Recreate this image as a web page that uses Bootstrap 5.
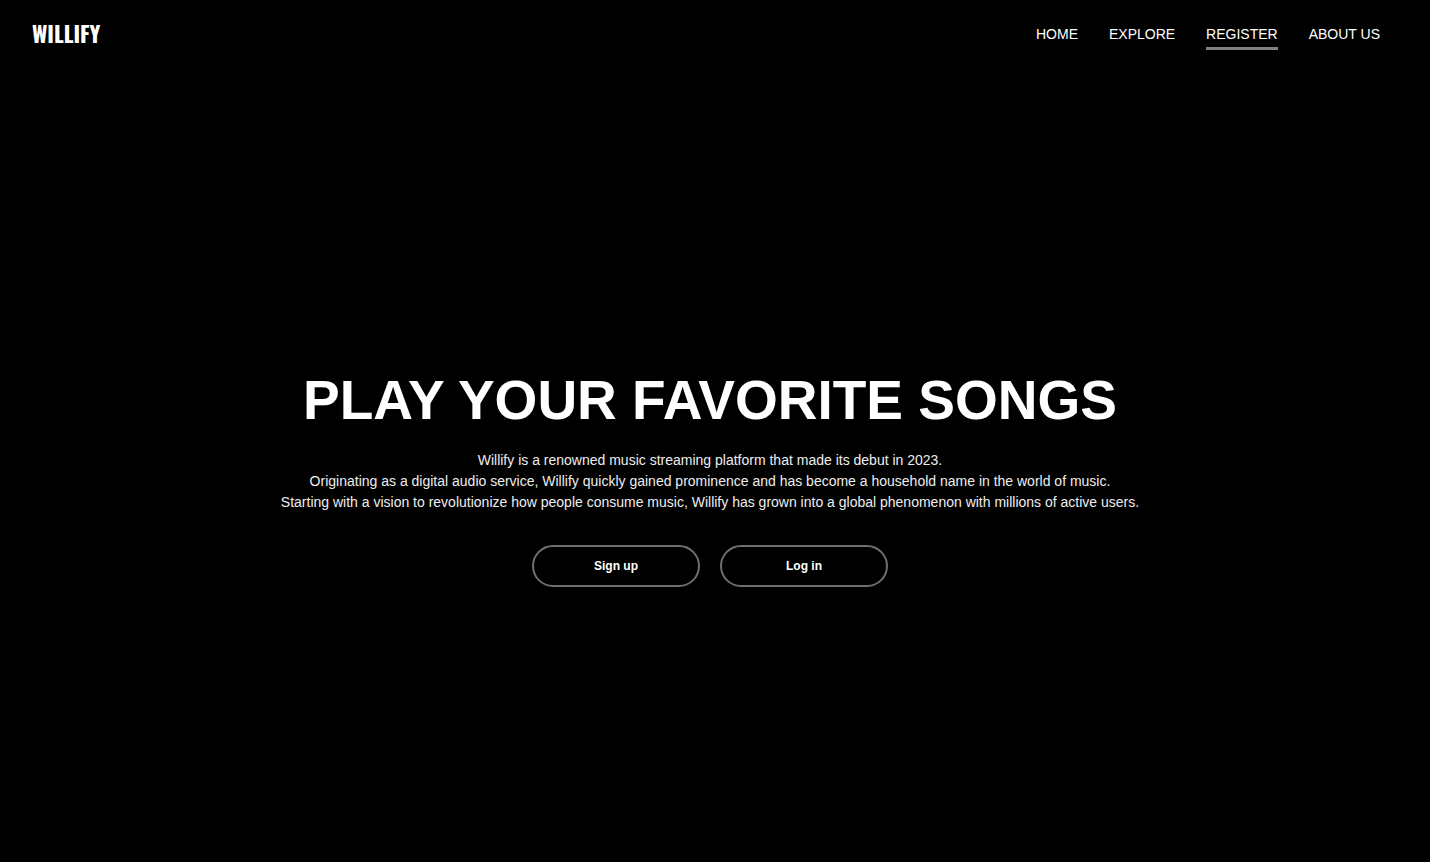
<!DOCTYPE html>
<html lang="en">
<head>
<meta charset="utf-8">
<meta name="viewport" content="width=device-width, initial-scale=1">
<title>Willify</title>
<link href="https://cdn.jsdelivr.net/npm/bootstrap@5.3.0/dist/css/bootstrap.min.css" rel="stylesheet">
<style>
body { font-family: "Liberation Sans", Arial, sans-serif; background: #000; color: #fff; }
.site-nav { padding: 16px 50px 0 32px; }
.brand-name { font-family: Oswald, "Liberation Sans Narrow", "Open Sans Condensed", sans-serif; font-weight: 700; font-size: 22px; line-height: 34px; padding: 0; margin: 0; }
.site-nav .menu { gap: 31px; padding-top: 6px; }
.site-nav .menu .nav-link { padding: 0 0 1px; font-size: 14px; line-height: 24px; color: #fff; border-bottom: 3px solid transparent; }
.site-nav .menu .nav-link.active { border-bottom-color: #808080; }
.hero { padding: 42px 10px 0 0; }
.hero-title { font-size: 55px; line-height: 64px; font-weight: 700; margin-bottom: 18px; }
.hero-copy { font-size: 14px; line-height: 21px; color: #eee; margin-bottom: 32px; }
.hero-actions { gap: 20px; }
.pill { width: 168px; height: 42px; border: 2px solid #6f6f6f; border-radius: 21px; color: #fff; font-size: 12px; font-weight: 700; padding: 0; }
.pill:hover { background: #222; color: #fff; }
</style>
</head>
<body class="min-vh-100 d-flex flex-column">
<header>
  <nav class="site-nav navbar navbar-expand align-items-start justify-content-between">
    <a class="navbar-brand brand-name text-white" href="#">WILLIFY</a>
    <ul class="navbar-nav menu">
      <li class="nav-item"><a class="nav-link" href="#">HOME</a></li>
      <li class="nav-item"><a class="nav-link" href="#">EXPLORE</a></li>
      <li class="nav-item"><a class="nav-link active" aria-current="page" href="#">REGISTER</a></li>
      <li class="nav-item"><a class="nav-link" href="#">ABOUT US</a></li>
    </ul>
  </nav>
</header>
<main class="hero flex-grow-1 d-flex flex-column justify-content-center align-items-center text-center">
  <h1 class="hero-title">PLAY YOUR FAVORITE SONGS</h1>
  <p class="hero-copy">Willify is a renowned music streaming platform that made its debut in 2023.<br>
  Originating as a digital audio service, Willify quickly gained prominence and has become a household name in the world of music.<br>
  Starting with a vision to revolutionize how people consume music, Willify has grown into a global phenomenon with millions of active users.</p>
  <div class="hero-actions d-flex">
    <button type="button" class="btn pill">Sign up</button>
    <button type="button" class="btn pill">Log in</button>
  </div>
</main>
<script src="https://cdn.jsdelivr.net/npm/bootstrap@5.3.0/dist/js/bootstrap.bundle.min.js"></script>
</body>
</html>
